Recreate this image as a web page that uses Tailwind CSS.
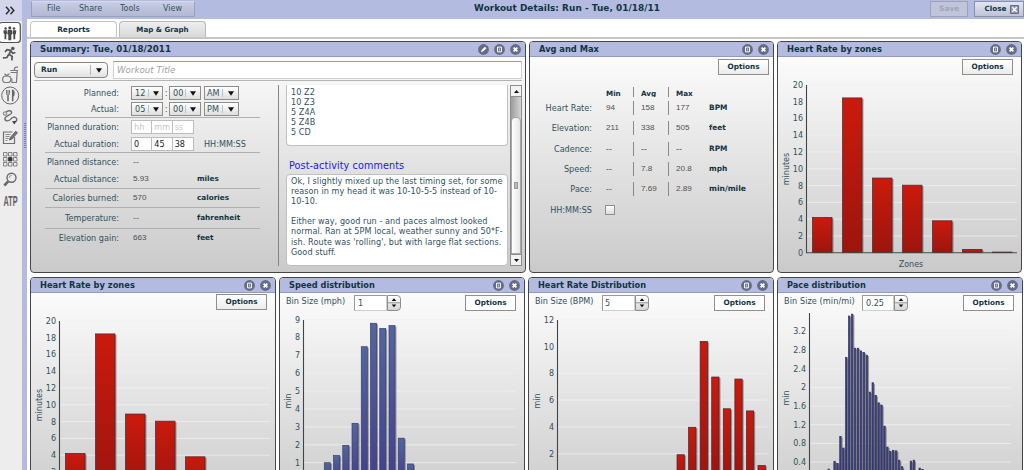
<!DOCTYPE html>
<html lang="en">

<head>
    <meta charset="UTF-8">
    <meta name="viewport" content="width=device-width, initial-scale=1.0">
    <title>Workout Details</title>
    <script src="https://cdn.jsdelivr.net/npm/@tailwindcss/browser@4"></script>
</head>

<body class="w-[1024px] h-[470px] overflow-hidden bg-white flex font-['DejaVu_Sans',sans-serif] text-[8.1px] leading-[10px] text-[#31515c]">

    <!-- shared icons -->
    <svg class="hidden">
        <symbol id="i-edit" viewBox="0 0 11 11">
            <circle cx="5.5" cy="5.5" r="5.4" fill="#686c83" />
            <path d="M3 8l.6-2L6.9 2.7l1.5 1.5L5 7.5z" fill="#fff" />
        </symbol>
        <symbol id="i-max" viewBox="0 0 11 11">
            <circle cx="5.5" cy="5.5" r="5.4" fill="#686c83" />
            <path d="M3.6 3.1h3.8v4.8H3.6z" fill="none" stroke="#fff" stroke-width="1" />
            <path d="M5.5 4.5v2" stroke="#d5d7e2" stroke-width=".9" />
        </symbol>
        <symbol id="i-close" viewBox="0 0 11 11">
            <circle cx="5.5" cy="5.5" r="5.4" fill="#686c83" />
            <path d="M3.6 3.6l3.8 3.8M7.4 3.6L3.6 7.4" stroke="#fff" stroke-width="1.7" />
        </symbol>
        <symbol id="i-down" viewBox="0 0 6 5">
            <path d="M0 .3h6L3 4.7z" fill="#111" />
        </symbol>
        <symbol id="i-step" viewBox="0 0 13 16">
            <path d="M4 5.3h5L6.5 2.4zM4 9.2h5l-2.5 2.9z" fill="#111" />
            <path d="M0 7.300h13" stroke="#8d8d8d" />
        </symbol>
    </svg>

    <!-- sidebar -->
    <aside class="w-[22px] shrink-0 bg-[#ededed] flex flex-col text-[#5c5c5c]">
        <div class="h-[21px] bg-[#d2d5ec] flex items-center justify-center">
            <svg class="w-[22px] h-[21px]" viewBox="0 0 22 21" fill="none" stroke="#2c2c35" stroke-width="1.5"><path d="M6 6.800l3.300 3.800L6 14.300M10.500 6.800l3.300 3.800-3.300 3.700" /></svg>
        </div>
        <svg class="w-[22px] h-[22px]" viewBox="0 0 22 22">
            <rect x="-1" y="1.500" width="21.300" height="20" rx="3" fill="#fff" stroke="#505050" stroke-width="1.200" />
            <g fill="#4a4a4a">
                <circle cx="5.600" cy="7.500" r="1.300" /><circle cx="9.800" cy="6.700" r="1.500" /><circle cx="14" cy="7.500" r="1.300" />
                <path d="M3.500 9.300h3.300l.3 3-.8 1v5H4.500v-5l-1-1.500zM7.800 8.700h4l.5 4.300-1 .8v5.400h-3v-5.400l-1-.8zM12.800 9.300h3.400l-.2 3.300-.8 1.200v4.500h-1.800v-5l-.9-1z" />
            </g>
        </svg>
        <svg class="w-[22px] h-[21px]" viewBox="0 0 22 21" fill="none" stroke="#555" stroke-width="1.700">
            <circle cx="12.800" cy="5.500" r="1.800" fill="#555" stroke="none" />
            <path d="M5 9l2-2.300 3.800.7-1.800 4 3.200 2-.4 4M8.500 11.800l-1.600 2.700-4 .3M10.800 8l2 2.200 2.600-.7" />
        </svg>
        <svg class="w-[22px] h-[21px]" viewBox="0 0 22 21" fill="none" stroke="#7b7b7b" stroke-width="1.200">
            <path d="M10.300 6.500h7l-.9 12h-5M12 18.500l-.3-4M14.200 6.500l.8-3 3-.7M10.500 8.500h6.700" />
            <path d="M6.800 12.200c-5-1.500-5.500 6-1.800 6.300h3.300c4-.5 3.300-7.700-1.500-6.300zM4.500 9.800l2.300 1.700 2.600-1.800" />
        </svg>
        <svg class="w-[22px] h-[21px]" viewBox="0 0 22 21" fill="none" stroke="#666">
            <circle cx="10.200" cy="10.500" r="8.500" stroke-width="1" />
            <path d="M8 10.500v5.700M12.700 4.700v11.500M12.700 5c1.400 1 1.700 4 .5 6" stroke-width="1.500" />
            <path d="M6.500 5v3.500c0 2.500 3 2.500 3 0V5M8 5v5" stroke-width=".9" />
        </svg>
        <svg class="w-[22px] h-[21px]" viewBox="0 0 22 21" fill="none" stroke="#6e6e6e">
            <circle cx="5" cy="7.500" r="1.700" stroke-width="1" />
            <path d="M6.300 6.200c1-1.900 5.200-2.200 5.400.4.200 2.200-6.500 2.900-6.800 5.900-.2 2.800 3.600 3 5.300 1.100 1.600-1.900 3.400-3.100 5.200-2.300 1.900 1 1.700 3.200.4 4.200" stroke-width="1.400" />
            <path d="M12 15.200l4.800-.4-2.500 3.800z" fill="#444" stroke="none" />
        </svg>
        <svg class="w-[22px] h-[21px]" viewBox="0 0 22 21" fill="none" stroke="#707070">
            <path d="M14.500 10v6.500h-11V5h9" stroke-width="1.200" />
            <path d="M5.500 7.500h5M5.500 9.500h4M5.500 11.500h3M5.500 13.500h2" stroke-width=".8" />
            <path d="M9.500 13l.7-2.300L15.700 4.300l1.700 1.500-5.700 6.400z" fill="#777" stroke="#555" stroke-width=".9" />
        </svg>
        <svg class="w-[22px] h-[21px]" viewBox="0 0 22 21" fill="none" stroke="#777" stroke-width=".9">
            <path d="M3.500 4.500h3.500v3.500H3.500zM8.500 4.500h3.500v3.500H8.500zM13.500 4.500h3.500v3.500h-3.500zM3.500 9.500h3.500v3.500H3.500zM13.500 9.500h3.500v3.500h-3.500zM3.500 14.500h3.500v3.500H3.500zM8.500 14.500h3.500v3.500H8.500zM13.500 14.500h3.500v3.500h-3.500z" />
            <path d="M8.500 9.500h3.500v3.500H8.500z" fill="#333" stroke="#444" />
        </svg>
        <svg class="w-[22px] h-[21px]" viewBox="0 0 22 21" fill="none" stroke="#6a6a6a">
            <circle cx="11.500" cy="8.800" r="4.500" stroke-width="1.400" />
            <path d="M9.300 8.700c0-1.300 1-2.200 2.200-2.200" stroke-width=".8" />
            <path d="M8.200 12.300L4.300 16.500" stroke-width="2.600" />
        </svg>
        <svg class="w-[22px] h-[21px]" viewBox="0 0 22 21">
            <text x="3.500" y="16" textLength="14" lengthAdjust="spacingAndGlyphs" font-family="Liberation Sans, sans-serif" font-weight="bold" font-size="15" fill="#5f5f5f">ATP</text>
        </svg>
    </aside>

    <!-- splitter -->
    <div class="w-[5px] shrink-0 bg-[#b3bbe0] pt-[123px] pl-[2px]">
        <div class="w-[2px] h-[25px] border-x-1 border-dotted border-[#7b83ae]"></div>
    </div>

    <main class="w-[997px] shrink-0 flex flex-col">
        <!-- title bar -->
        <header class="h-[19px] shrink-0 bg-[#b3bbe0] flex items-start">
            <nav class="ml-[4px] mt-[1px] w-[166px] h-[16px] border border-[#999fbd] border-t-[#d6daed] bg-linear-to-b from-[#c9cee6] to-[#b2b8d3] flex items-center text-[8px]">
                <span class="w-[32px] ml-[15px]">File</span>
                <span class="w-[41px]">Share</span>
                <span class="w-[43px]">Tools</span>
                <span>View</span>
            </nav>
            <h1 class="ml-[277px] w-[456px] mt-[3px] pl-[2px] text-[8.9px] tracking-[0.06px] font-bold text-[#12343f] whitespace-nowrap">Workout Details: Run - Tue, 01/18/11</h1>
            <button class="ml-[7px] mt-[1px] w-[39px] h-[16px] border border-[#9da2ba] bg-[#c0c5da] text-[7.4px] font-bold text-[#a0a5b8]">Save</button>
            <button class="ml-[6px] mt-[1px] w-[50px] h-[16px] border border-[#8b8fa5] bg-linear-to-b from-[#e4e6f1] to-[#bfc3d8] text-[7.2px] font-bold text-[#12343f] flex items-center pl-[9px] gap-[4px]">Close
                <svg class="w-[9px] h-[9px] shrink-0" viewBox="0 0 9 9"><path d="M.5.5h8v8h-8z" fill="#9298b5" stroke="#686c83" /><path d="M2.300 2.300l4.400 4.400M6.700 2.300L2.300 6.700" stroke="#fff" stroke-width="1.300" /></svg>
            </button>
        </header>

        <!-- tabs -->
        <div class="h-[20px] shrink-0 border-b-2 border-[#c6c6c6] flex items-end pl-[3px] gap-[2px] text-[7.4px] font-bold text-[#12343f]">
            <div class="w-[87px] h-[16px] rounded-t-sm border border-b-0 border-[#c3c3c3] bg-white flex items-center justify-center">Reports</div>
            <div class="w-[87px] h-[16px] rounded-t-sm border border-b-0 border-[#b9b9b9] bg-linear-to-b from-[#eeeeee] to-[#d9d9d9] flex items-center justify-center text-[7.100px]">Map &amp; Graph</div>
        </div>

        <div class="pl-[3px] pt-[2px] flex flex-col gap-[4px]">
            <!-- first row of pods -->
            <div class="flex gap-[3px]">
                <section class="w-[496px] h-[232px] rounded-[4px] border border-[#464646] bg-linear-to-b from-white to-[#cacaca] overflow-hidden">
                    <div class="h-[15px] bg-[#b3bbe0] border-b border-[#9199c6] flex items-center pl-[9px] pr-[4px] gap-[5px]">
                        <h2 class="flex-1 text-[8.7px] font-bold text-[#12343f]">Summary: Tue, 01/18/2011</h2>
                        <svg class="w-[11px] h-[11px]"><use href="#i-edit" /></svg>
                        <svg class="w-[11px] h-[11px]"><use href="#i-max" /></svg>
                        <svg class="w-[11px] h-[11px]"><use href="#i-close" /></svg>
                    </div>
                    <div class="mx-[3px] h-[24px] pt-[4px] border-b border-[#b5b5b5] flex gap-[5px]">
                        <div class="mt-[1px] w-[74px] h-[16px] rounded-[4px] border border-[#858585] bg-linear-to-b from-white to-[#e2e2e2] flex items-center pl-[6px] pr-[5px] text-[7.4px] font-bold text-[#12343f]">
                            <span class="flex-1">Run</span>
                            <span class="h-[10px] border-l border-[#b5b5b5] pl-[5px] flex items-center"><svg class="w-[6px] h-[5px]"><use href="#i-down" /></svg></span>
                        </div>
                        <div class="w-[409px] h-[18px] border border-[#cfcfcf] border-t-[#999] bg-white pl-[3px] flex items-center text-[8.7px] italic text-[#a3a3a3]">Workout Title</div>
                    </div>
                    <div class="flex pl-[14px] pt-[4px]">
                        <div class="w-[215px] flex flex-col">
                            <div class="h-[16px] flex items-center">
                                <span class="w-[74px] text-right mr-[12px]">Planned:</span>
                                <span class="w-[32px] h-[14px] border border-[#8d8d8d] bg-linear-to-b from-white to-[#dedede] pl-[3px] pr-[3px] flex items-center">12<span class="ml-auto h-[8px] border-l border-[#c2c2c2] pl-[4px] flex items-center"><svg class="w-[6px] h-[5px]"><use href="#i-down" /></svg></span></span>
                                <span class="w-[6px] text-center">:</span>
                                <span class="w-[32px] h-[14px] border border-[#8d8d8d] bg-linear-to-b from-white to-[#dedede] pl-[3px] pr-[4px] flex items-center">00<span class="ml-auto h-[8px] border-l border-[#c2c2c2] pl-[4px] flex items-center"><svg class="w-[6px] h-[5px]"><use href="#i-down" /></svg></span></span>
                                <span class="ml-[3px] w-[35px] h-[14px] border border-[#8d8d8d] bg-linear-to-b from-white to-[#dedede] pl-[2px] pr-[4px] flex items-center">AM<span class="ml-auto h-[8px] border-l border-[#c2c2c2] pl-[5px] flex items-center"><svg class="w-[6px] h-[5px]"><use href="#i-down" /></svg></span></span>
                            </div>
                            <div class="h-[17px] flex items-start pt-px border-b border-[#b0b0b0]">
                                <span class="w-[74px] text-right mr-[12px] mt-[2px]">Actual:</span>
                                <span class="w-[32px] h-[14px] border border-[#8d8d8d] bg-linear-to-b from-white to-[#dedede] pl-[3px] pr-[3px] flex items-center">05<span class="ml-auto h-[8px] border-l border-[#c2c2c2] pl-[4px] flex items-center"><svg class="w-[6px] h-[5px]"><use href="#i-down" /></svg></span></span>
                                <span class="w-[6px] text-center mt-[2px]">:</span>
                                <span class="w-[32px] h-[14px] border border-[#8d8d8d] bg-linear-to-b from-white to-[#dedede] pl-[3px] pr-[4px] flex items-center">00<span class="ml-auto h-[8px] border-l border-[#c2c2c2] pl-[4px] flex items-center"><svg class="w-[6px] h-[5px]"><use href="#i-down" /></svg></span></span>
                                <span class="ml-[3px] w-[35px] h-[14px] border border-[#8d8d8d] bg-linear-to-b from-white to-[#dedede] pl-[2px] pr-[4px] flex items-center">PM<span class="ml-auto h-[8px] border-l border-[#c2c2c2] pl-[5px] flex items-center"><svg class="w-[6px] h-[5px]"><use href="#i-down" /></svg></span></span>
                            </div>
                            <div class="h-[17px] flex items-center">
                                <span class="w-[74px] text-right mr-[12px]">Planned duration:</span>
                                <span class="w-[63px] h-[14px] mt-[1px] border border-[#bdbdbd] bg-white grid grid-cols-3 divide-x divide-[#bdbdbd] text-[#c6c6c6]"><span class="pl-[2px] pt-px">hh</span><span class="pl-[2px] pt-px">mm</span><span class="pl-[2px] pt-px">ss</span></span>
                            </div>
                            <div class="h-[18px] flex items-center border-b border-[#b0b0b0]">
                                <span class="w-[74px] text-right mr-[12px]">Actual duration:</span>
                                <span class="w-[63px] h-[14px] border border-[#bdbdbd] bg-white grid grid-cols-3 divide-x divide-[#bdbdbd] text-[#222]"><span class="pl-[2px] pt-px">0</span><span class="pl-[2px] pt-px">45</span><span class="pl-[2px] pt-px">38</span></span>
                                <span class="ml-[10px]">HH:MM:SS</span>
                            </div>
                            <div class="h-[18px] flex items-center">
                                <span class="w-[74px] text-right mr-[14px]">Planned distance:</span>
                                <span class="text-[#666]">--</span>
                            </div>
                            <div class="h-[18px] flex items-center border-b border-[#b0b0b0] pb-[2px]">
                                <span class="w-[74px] text-right mr-[14px]">Actual distance:</span>
                                <span class="w-[64px] text-[#505050] font-['Liberation_Sans',sans-serif]">5.93</span>
                                <span class="text-[7.3px] font-bold text-[#12343f]">miles</span>
                            </div>
                            <div class="h-[19px] flex items-center border-b border-[#b0b0b0]">
                                <span class="w-[74px] text-right mr-[14px] whitespace-nowrap">Calories burned:</span>
                                <span class="w-[64px] text-[#505050] font-['Liberation_Sans',sans-serif]">570</span>
                                <span class="text-[7.3px] font-bold text-[#12343f]">calories</span>
                            </div>
                            <div class="h-[21px] flex items-center border-b border-[#b0b0b0]">
                                <span class="w-[74px] text-right mr-[14px]">Temperature:</span>
                                <span class="w-[64px] text-[#666]">--</span>
                                <span class="text-[7.3px] font-bold text-[#12343f]">fahrenheit</span>
                            </div>
                            <div class="h-[17px] flex items-center">
                                <span class="w-[74px] text-right mr-[14px]">Elevation gain:</span>
                                <span class="w-[64px] text-[#505050] font-['Liberation_Sans',sans-serif]">663</span>
                                <span class="text-[7.3px] font-bold text-[#12343f]">feet</span>
                            </div>
                        </div>
                        <div class="ml-[18px] w-px h-[181px] bg-[#858585]"></div>
                        <div class="ml-[7px] w-[222px] h-[181px] flex flex-col tracking-[0.07px]">
                            <div class="h-[61px] rounded-b-[4px] border border-t-0 border-[#c0c0c0] bg-white pl-[4px] pt-[2px] whitespace-pre leading-[10.1px]">10 Z2
10 Z3
5 Z4A
5 Z4B
5 CD</div>
                            <h3 class="h-[28px] pt-[15px] pl-[3px] text-[9.7px] text-[#2417ee]">Post-activity comments</h3>
                            <div class="h-[92px] rounded-[4px] border border-[#c0c0c0] bg-white pl-[4px] pt-[1px] whitespace-pre leading-[10.1px]">Ok, I slightly mixed up the last timing set, for some
reason in my head it was 10-10-5-5 instead of 10-
10-10.

Either way, good run - and paces almost looked
normal. Ran at 5PM local, weather sunny and 50*F-
ish. Route was 'rolling', but with large flat sections.
Good stuff.</div>
                        </div>
                        <!-- scrollbar -->
                        <div class="ml-[2px] w-[12px] h-[181px] border border-[#8d8d8d] bg-linear-to-r from-[#9d9d9d] to-[#d5d5d5] flex flex-col">
                            <div class="h-[11px] bg-[#f2f2f2] border-b border-[#8d8d8d] flex items-center justify-center"><svg class="w-[5px] h-[3px]" viewBox="0 0 5 3"><path d="M0 3h5L2.500 0z" fill="#111" /></svg></div>
                            <div class="mt-[20px] flex-1 rounded-t-sm bg-linear-to-r from-white to-[#e6e6e6] border border-[#a8a8a8] flex items-center justify-center">
                                <div class="w-[4px] h-[7px] bg-[#bcbcbc] border border-[#999]"></div>
                            </div>
                            <div class="h-[11px] bg-[#f2f2f2] border-t border-[#8d8d8d] flex items-center justify-center"><svg class="w-[5px] h-[3px]" viewBox="0 0 5 3"><path d="M0 0h5L2.500 3z" fill="#111" /></svg></div>
                        </div>
                    </div>
                </section>

                <section class="w-[245px] h-[232px] rounded-[4px] border border-[#464646] bg-linear-to-b from-white to-[#cacaca] overflow-hidden">
                    <div class="h-[15px] bg-[#b3bbe0] border-b border-[#9199c6] flex items-center pl-[9px] pr-[4px] gap-[5px]">
                        <h2 class="flex-1 text-[8.3px] font-bold text-[#12343f]">Avg and Max</h2>
                        <svg class="w-[11px] h-[11px]"><use href="#i-max" /></svg>
                        <svg class="w-[11px] h-[11px]"><use href="#i-close" /></svg>
                    </div>
                    <div class="h-[29px] pt-[2px] pr-[4px] flex justify-end">
                        <button class="w-[51px] h-[16px] border border-[#8f8f8f] bg-linear-to-b from-white to-[#ececec] text-[7.3px] font-bold text-[#12343f]">Options</button>
                    </div>
                    <div class="grid grid-cols-[62px_41px_35px_35px_1fr] grid-rows-[12px] auto-rows-[20.3px] items-center text-[#505050] font-['Liberation_Sans',sans-serif]">
                        <span></span>
                        <b class="h-[10px] pl-[14px] text-[7.2px] leading-[13px] text-[#12343f] font-['DejaVu_Sans',sans-serif] overflow-hidden">Min</b>
                        <b class="h-[10px] pl-[7px] border-l border-[#8a8a8a] text-[7.2px] leading-[13px] text-[#12343f] font-['DejaVu_Sans',sans-serif] overflow-hidden">Avg</b>
                        <b class="h-[10px] pl-[7px] border-l border-[#8a8a8a] text-[7.2px] leading-[13px] text-[#12343f] font-['DejaVu_Sans',sans-serif] overflow-hidden">Max</b>
                        <span></span>

                        <span class="text-right text-[#31515c] font-['DejaVu_Sans',sans-serif]">Heart Rate:</span>
                        <span class="pl-[14px]">94</span>
                        <span class="pl-[7px] h-[14px] leading-[14px] border-l border-[#8a8a8a]">158</span>
                        <span class="pl-[7px] h-[14px] leading-[14px] border-l border-[#8a8a8a]">177</span>
                        <b class="pl-[6px] text-[7.4px] text-[#12343f] font-['DejaVu_Sans',sans-serif]">BPM</b>

                        <span class="text-right text-[#31515c] font-['DejaVu_Sans',sans-serif]">Elevation:</span>
                        <span class="pl-[14px]">211</span>
                        <span class="pl-[7px] h-[14px] leading-[14px] border-l border-[#8a8a8a]">338</span>
                        <span class="pl-[7px] h-[14px] leading-[14px] border-l border-[#8a8a8a]">505</span>
                        <b class="pl-[6px] text-[7.4px] text-[#12343f] font-['DejaVu_Sans',sans-serif]">feet</b>

                        <span class="text-right text-[#31515c] font-['DejaVu_Sans',sans-serif]">Cadence:</span>
                        <span class="pl-[14px] font-['DejaVu_Sans',sans-serif]">--</span>
                        <span class="pl-[7px] h-[14px] leading-[14px] border-l border-[#8a8a8a] font-['DejaVu_Sans',sans-serif]">--</span>
                        <span class="pl-[7px] h-[14px] leading-[14px] border-l border-[#8a8a8a] font-['DejaVu_Sans',sans-serif]">--</span>
                        <b class="pl-[6px] text-[7.4px] text-[#12343f] font-['DejaVu_Sans',sans-serif]">RPM</b>

                        <span class="text-right text-[#31515c] font-['DejaVu_Sans',sans-serif]">Speed:</span>
                        <span class="pl-[14px] font-['DejaVu_Sans',sans-serif]">--</span>
                        <span class="pl-[7px] h-[14px] leading-[14px] border-l border-[#8a8a8a]">7.8</span>
                        <span class="pl-[7px] h-[14px] leading-[14px] border-l border-[#8a8a8a]">20.8</span>
                        <b class="pl-[6px] text-[7.4px] text-[#12343f] font-['DejaVu_Sans',sans-serif]">mph</b>

                        <span class="text-right text-[#31515c] font-['DejaVu_Sans',sans-serif]">Pace:</span>
                        <span class="pl-[14px] font-['DejaVu_Sans',sans-serif]">--</span>
                        <span class="pl-[7px] h-[14px] leading-[14px] border-l border-[#8a8a8a]">7.69</span>
                        <span class="pl-[7px] h-[14px] leading-[14px] border-l border-[#8a8a8a]">2.89</span>
                        <b class="pl-[6px] text-[7.6px] text-[#12343f] font-['DejaVu_Sans',sans-serif]">min/mile</b>

                        <span class="text-right text-[#31515c] font-['DejaVu_Sans',sans-serif]">HH:MM:SS</span>
                        <span class="ml-[13px] w-[10px] h-[10px] border border-[#8f8f8f] bg-linear-to-b from-white to-[#dcdcdc]"></span>
                    </div>
                </section>

                <section class="w-[245px] h-[232px] rounded-[4px] border border-[#464646] bg-linear-to-b from-white to-[#cacaca] overflow-hidden">
                    <div class="h-[15px] bg-[#b3bbe0] border-b border-[#9199c6] flex items-center pl-[9px] pr-[4px] gap-[5px]">
                        <h2 class="flex-1 text-[8.3px] font-bold text-[#12343f]">Heart Rate by zones</h2>
                        <svg class="w-[11px] h-[11px]"><use href="#i-max" /></svg>
                        <svg class="w-[11px] h-[11px]"><use href="#i-close" /></svg>
                    </div>
                    <div class="h-[20px] pt-[2px] pr-[8px] flex justify-end">
                        <button class="w-[51px] h-[16px] border border-[#8f8f8f] bg-linear-to-b from-white to-[#ececec] text-[7.3px] font-bold text-[#12343f]">Options</button>
                    </div>
                    <svg class="w-[243px] h-[195px]" data-chart="zones"></svg>
                </section>
            </div>

            <!-- second row of pods -->
            <div class="flex gap-[3px]">
                <section class="w-[246px] h-[232px] rounded-[4px] border border-[#464646] bg-linear-to-b from-white to-[#cacaca] overflow-hidden">
                    <div class="h-[15px] bg-[#b3bbe0] border-b border-[#9199c6] flex items-center pl-[9px] pr-[4px] gap-[5px]">
                        <h2 class="flex-1 text-[8.3px] font-bold text-[#12343f]">Heart Rate by zones</h2>
                        <svg class="w-[11px] h-[11px]"><use href="#i-max" /></svg>
                        <svg class="w-[11px] h-[11px]"><use href="#i-close" /></svg>
                    </div>
                    <div class="h-[20px] pt-[1px] pr-[8px] flex justify-end">
                        <button class="w-[51px] h-[16px] border border-[#8f8f8f] bg-linear-to-b from-white to-[#ececec] text-[7.3px] font-bold text-[#12343f]">Options</button>
                    </div>
                    <svg class="w-[244px] h-[195px]" data-chart="zones"></svg>
                </section>

                <section class="w-[246px] h-[232px] rounded-[4px] border border-[#464646] bg-linear-to-b from-white to-[#cacaca] overflow-hidden">
                    <div class="h-[15px] bg-[#b3bbe0] border-b border-[#9199c6] flex items-center pl-[9px] pr-[4px] gap-[5px]">
                        <h2 class="flex-1 text-[8.2px] font-bold text-[#12343f]">Speed distribution</h2>
                        <svg class="w-[11px] h-[11px]"><use href="#i-max" /></svg>
                        <svg class="w-[11px] h-[11px]"><use href="#i-close" /></svg>
                    </div>
                    <div class="h-[20px] pt-[2px] pl-[6px] pr-[8px] flex">
                        <span class="w-[68px] pt-[1px]">Bin Size (mph)</span>
                        <span class="w-[33px] h-[16px] border border-[#cfcfcf] border-t-[#999] border-l-[#999] bg-white pl-[3px] pt-[2px]">1</span>
                        <svg class="w-[14px] h-[16px] rounded-r-[4px] border border-[#8d8d8d] bg-linear-to-b from-white to-[#d5d5d5]" viewBox="0 0 13 15"><use href="#i-step" width="13" height="16" /></svg>
                        <button class="ml-auto w-[51px] h-[16px] border border-[#8f8f8f] bg-white text-[7.3px] font-bold text-[#12343f]">Options</button>
                    </div>
                    <svg class="w-[244px] h-[195px]" data-chart="speed"></svg>
                </section>

                <section class="w-[246px] h-[232px] rounded-[4px] border border-[#464646] bg-linear-to-b from-white to-[#cacaca] overflow-hidden">
                    <div class="h-[15px] bg-[#b3bbe0] border-b border-[#9199c6] flex items-center pl-[9px] pr-[5px] gap-[5px]">
                        <h2 class="flex-1 text-[8.2px] font-bold text-[#12343f]">Heart Rate Distribution</h2>
                        <svg class="w-[11px] h-[11px]"><use href="#i-max" /></svg>
                        <svg class="w-[11px] h-[11px]"><use href="#i-close" /></svg>
                    </div>
                    <div class="h-[20px] pt-[2px] pl-[6px] pr-[8px] flex">
                        <span class="w-[67px] pt-[1px]">Bin Size (BPM)</span>
                        <span class="w-[33px] h-[16px] border border-[#cfcfcf] border-t-[#999] border-l-[#999] bg-white pl-[2px] pt-[2px]">5</span>
                        <svg class="w-[14px] h-[16px] rounded-r-[4px] border border-[#8d8d8d] bg-linear-to-b from-white to-[#d5d5d5]" viewBox="0 0 13 15"><use href="#i-step" width="13" height="16" /></svg>
                        <button class="ml-auto w-[51px] h-[16px] border border-[#8f8f8f] bg-white text-[7.3px] font-bold text-[#12343f]">Options</button>
                    </div>
                    <svg class="w-[244px] h-[195px]" data-chart="heart"></svg>
                </section>

                <section class="w-[246px] h-[232px] rounded-[4px] border border-[#464646] bg-linear-to-b from-white to-[#cacaca] overflow-hidden">
                    <div class="h-[15px] bg-[#b3bbe0] border-b border-[#9199c6] flex items-center pl-[9px] pr-[4px] gap-[5px]">
                        <h2 class="flex-1 text-[8.2px] font-bold text-[#12343f]">Pace distribution</h2>
                        <svg class="w-[11px] h-[11px]"><use href="#i-max" /></svg>
                        <svg class="w-[11px] h-[11px]"><use href="#i-close" /></svg>
                    </div>
                    <div class="h-[20px] pt-[2px] pl-[6px] pr-[8px] flex">
                        <span class="w-[78px] pt-[1px] tracking-[0.1px]">Bin Size (min/mi)</span>
                        <span class="w-[32px] h-[16px] border border-[#cfcfcf] border-t-[#999] border-l-[#999] bg-white pl-[3px] pt-[2px]">0.25</span>
                        <svg class="w-[14px] h-[16px] rounded-r-[4px] border border-[#8d8d8d] bg-linear-to-b from-white to-[#d5d5d5]" viewBox="0 0 13 15"><use href="#i-step" width="13" height="16" /></svg>
                        <button class="ml-auto w-[51px] h-[16px] border border-[#8f8f8f] bg-white text-[7.3px] font-bold text-[#12343f]">Options</button>
                    </div>
                    <svg class="w-[244px] h-[195px]" data-chart="pace"></svg>
                </section>
            </div>
        </div>
    </main>

    <script>
        // x0/x1: plot edges, y0: zero line, unit: pixels per 1.0, ticks: gridline values
        const charts = {
            zones: {
                x0: 28.5, x1: 239, top: 8, y0: 175.7, unit: 8.39, first: 34.5, pitch: 30, width: 19.5,
                ticks: [0, 2, 4, 6, 8, 10, 12, 14, 16, 18, 20], values: [4.2, 18.45, 8.9, 8.05, 3.8, 0.4, 0.08],
                label: 'minutes', labelY: 92, labelX: 10.5, from: '#cb1a0c', to: '#9c150e', line: '#4d2030', xLabel: 'Zones'
            },
            speed: {
                x0: 23.5, x1: 236.5, top: 7, y0: 167.6, unit: 17.9, first: 44.3, pitch: 9.24, width: 6,
                ticks: [0, 1, 2, 3, 4, 5, 6, 7, 8, 9], values: [1, 1.4, 1.97, 3.2, 7.48, 8.79, 8.5, 8.66, 2.37, 0.93],
                label: 'min', labelY: 88, labelX: 10.5, from: '#53669b', to: '#443f8e', line: '#383e70'
            },
            heart: {
                x0: 28.5, x1: 238.5, top: 7, y0: 167.6, unit: 13.4, first: 148, pitch: 11.57, width: 7.3,
                ticks: [0, 2, 4, 6, 8, 10, 12], values: [1.93, 3.98, 10.39, 7.73, 5.36, 7.58, 5.2, 1.13],
                label: 'min', labelY: 88, labelX: 10.5, from: '#cb1a0c', to: '#9c150e', line: '#4d2030'
            },
            pace: {
                x0: 31.5, x1: 233, top: 0, y0: 167.7, unit: 46.65, first: 50, pitch: 2.935, width: 1.4,
                ticks: [0, 0.4, 0.8, 1.2, 1.6, 2, 2.4, 2.8, 3.2],
                values: [0.25, 0.18, 0.41, 0.37, 0.95, 0.7, 2.64, 3.53, 3.57, 2.84, 2.84, 2.78, 2.75, 2.69, 1.9, 2.1, 1.83, 1.67, 1.62, 1.17, 0.72, 0.63, 0.65, 0.64, 0.44, 0.3, 0, 0, 0.42, 0.44, 0, 0.27, 0.24],
                label: 'min', labelY: 85, labelX: 10.5, from: '#454a78', to: '#333970', line: '#2b2f66'
            }
        };

        document.querySelectorAll('svg[data-chart]').forEach((svg, i) => {
            const c = charts[svg.dataset.chart];
            let out = `<defs><linearGradient id="fill${i}" x1="0" y1="0" x2="0" y2="1"><stop offset="0" stop-color="${c.from}"/><stop offset="1" stop-color="${c.to}"/></linearGradient></defs>`;

            c.ticks.forEach(t => {
                const y = c.y0 - t * c.unit;
                out += `<path d="M${c.x0} ${y}H${c.x1}" stroke="#f0f0f0" stroke-opacity=".75"/>`;
                out += `<text x="${c.x0 - 3.5}" y="${y + 3}" text-anchor="end" font-size="8" fill="#31515c">${t}</text>`;
            });

            c.values.forEach((v, n) => {
                if (!v) return;
                const x = c.first + n * c.pitch;
                const h = v * c.unit;
                const y = c.y0 - h;
                out += `<rect x="${x + 1.5}" y="${y + 1}" width="${c.width}" height="${Math.max(h - 1, 0)}" fill="#000" fill-opacity=".35"/>`;
                out += `<rect x="${x}" y="${y}" width="${c.width}" height="${h}" fill="url(#fill${i})" stroke="${c.line}" stroke-width=".7"/>`;
            });

            out += `<path d="M${c.x0} ${c.top}V${c.y0}H${c.x1}" fill="none" stroke="#444" stroke-width="1.1"/>`;
            out += `<text transform="translate(${c.labelX} ${c.labelY}) rotate(-90)" text-anchor="middle" font-size="8" fill="#31515c">${c.label}</text>`;
            if (c.xLabel) {
                out += `<text x="133" y="190" text-anchor="middle" font-size="8" fill="#31515c">${c.xLabel}</text>`;
            }
            svg.innerHTML = out;
        });
    </script>
</body>

</html>
